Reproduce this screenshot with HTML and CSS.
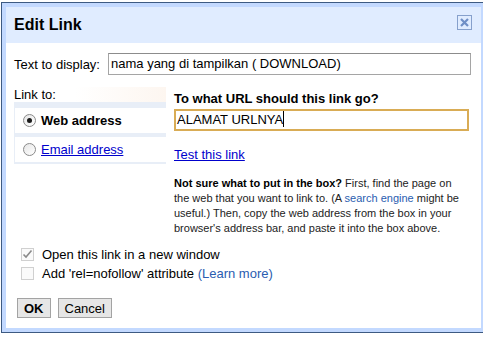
FILE: index.html
```html
<!DOCTYPE html>
<html lang="en">
<head>
    <meta charset="UTF-8">
    <meta name="viewport" content="width=device-width, initial-scale=1.0">
    <title>Edit Link</title>
    <link rel="stylesheet" href="styles.css">
</head>
<body>
    <div class="dialog">
        <div class="dialog-title">
            <span class="title-text">Edit Link</span>
            <span class="close-btn">
                <svg width="13" height="13" viewBox="0 0 13 13">
                    <path d="M3 3 L10 10 M10 3 L3 10" stroke="#6f8fc6" stroke-width="2.2" fill="none"/>
                </svg>
            </span>
        </div>
        <div class="dialog-body">
            <div class="display-row">
                <span class="display-label">Text to display:</span>
                <div class="field">nama yang di tampilkan ( DOWNLOAD)</div>
            </div>

            <div class="link-section">
                <div class="link-left">
                    <div class="link-head">Link to:</div>
                    <div class="link-options">
                        <div class="option selected">
                            <span class="radio checked"></span>
                            <span>Web address</span>
                        </div>
                        <div class="option">
                            <span class="radio"></span>
                            <a href="#">Email address</a>
                        </div>
                    </div>
                </div>
                <div class="link-right">
                    <div class="url-head">To what URL should this link go?</div>
                    <div class="field focused">ALAMAT URLNYA<span class="caret"></span></div>
                    <a class="test-link" href="#">Test this link</a>
                    <p class="help">
                        <b>Not sure what to put in the box?</b> First, find the page on
                        the web that you want to link to. (A <span class="soft-link">search engine</span> might be
                        useful.) Then, copy the web address from the box in your
                        browser's address bar, and paste it into the box above.
                    </p>
                </div>
            </div>

            <div class="checks">
                <div class="check-row">
                    <span class="checkbox">
                        <svg width="11" height="11" viewBox="0 0 11 11">
                            <path d="M1.5 5.5 L4 8 L9.5 1.5" stroke="#8a8a8a" stroke-width="1.6" fill="none"/>
                        </svg>
                    </span>
                    <span>Open this link in a new window</span>
                </div>
                <div class="check-row">
                    <span class="checkbox"></span>
                    <span>Add 'rel=nofollow' attribute <span class="soft-link">(Learn more)</span></span>
                </div>
            </div>

            <div class="buttons">
                <button class="btn btn-ok">OK</button>
                <button class="btn">Cancel</button>
            </div>
        </div>
    </div>
</body>
</html>
```

FILE: styles.css
```css
*{
    margin: 0;
    padding: 0;
    box-sizing: border-box;
}
body{
    background: #ffffff;
    font-family: "Liberation Sans", Arial, sans-serif;
    font-size: 13px;
    color: #000000;
}
.dialog{
    width: 482px;
    margin: 2px 0 0 1px;
    background: #c3d9ff;
    border: 1px solid #3d5a82;
    border-right: none;
    padding: 4px 2px 4px 4px;
}
.dialog-title{
    height: 36px;
    background: #e0ecff;
    display: flex;
    justify-content: space-between;
    padding: 0 9px 0 8px;
}
.title-text{
    font-size: 16px;
    font-weight: bold;
    line-height: 36px;
}
.close-btn{
    width: 15px;
    height: 15px;
    margin-top: 8px;
    border: 1px solid #86a0cc;
    display: flex;
    align-items: center;
    justify-content: center;
}
.dialog-body{
    height: 285px;
    background: #ffffff;
    padding: 10px 10px 0 8px;
}
.display-row{
    display: flex;
    align-items: center;
}
.display-label{
    width: 94px;
}
.field{
    flex: 1;
    height: 22px;
    border: 1px solid #a5a5a5;
    border-top-color: #8c8c8c;
    padding: 0 2px;
    line-height: 20px;
    white-space: nowrap;
}
.field.focused{
    border: 2px solid #d9ac55;
    padding: 0 1px;
    line-height: 18px;
}
.caret{
    display: inline-block;
    width: 1px;
    height: 16px;
    background: #000000;
    vertical-align: -3px;
}
.link-section{
    display: flex;
    gap: 8px;
    margin-top: 12px;
}
.link-left{
    width: 152px;
}
.link-head{
    height: 15px;
    line-height: 15px;
    background: linear-gradient(to right, #ffffff 40%, #fdf6f0);
}
.link-options{
    background: #e8eef7;
    padding: 6px 0 2px 1px;
    display: flex;
    flex-direction: column;
    gap: 4px;
}
.option{
    height: 25px;
    background: #ffffff;
    display: flex;
    align-items: center;
    gap: 5px;
    padding-left: 8px;
}
.option.selected{
    font-weight: bold;
}
a{
    color: #0000cc;
}
.radio{
    width: 13px;
    height: 13px;
    border-radius: 50%;
    border: 1px solid #8a8a8a;
    background: linear-gradient(135deg, #e6e6e6, #ffffff);
    display: flex;
    align-items: center;
    justify-content: center;
}
.radio.checked::after{
    content: "";
    width: 5px;
    height: 5px;
    border-radius: 50%;
    background: #1a1a1a;
}
.link-right{
    flex: 1;
    display: flex;
    flex-direction: column;
    align-items: flex-start;
}
.url-head{
    font-weight: bold;
    line-height: 15px;
    margin-top: 4px;
    margin-bottom: 3px;
}
.link-right .field{
    flex: none;
    width: 295px;
}
.test-link{
    line-height: 15px;
    margin-top: 16px;
}
.help{
    margin-top: 14px;
    width: 292px;
    font-size: 11px;
    line-height: 15px;
    color: #222222;
}
.help b{
    color: #000000;
}
.soft-link{
    color: #2a5db0;
}
.checks{
    margin-top: 9px;
    padding-left: 7px;
}
.check-row{
    height: 19px;
    display: flex;
    align-items: center;
    gap: 8px;
}
.checkbox{
    width: 13px;
    height: 13px;
    border: 1px solid #d0d0d0;
    background: #fafafa;
    display: flex;
    align-items: center;
    justify-content: center;
}
.buttons{
    display: flex;
    gap: 7px;
    margin-top: 15px;
    padding-left: 3px;
}
.btn{
    height: 20px;
    padding: 0 6px;
    font-family: "Liberation Sans", Arial, sans-serif;
    font-size: 13px;
    background: #e6e6e6;
    border: 1px solid #a3a3a3;
    color: #000000;
}
.btn-ok{
    font-weight: bold;
}
```
